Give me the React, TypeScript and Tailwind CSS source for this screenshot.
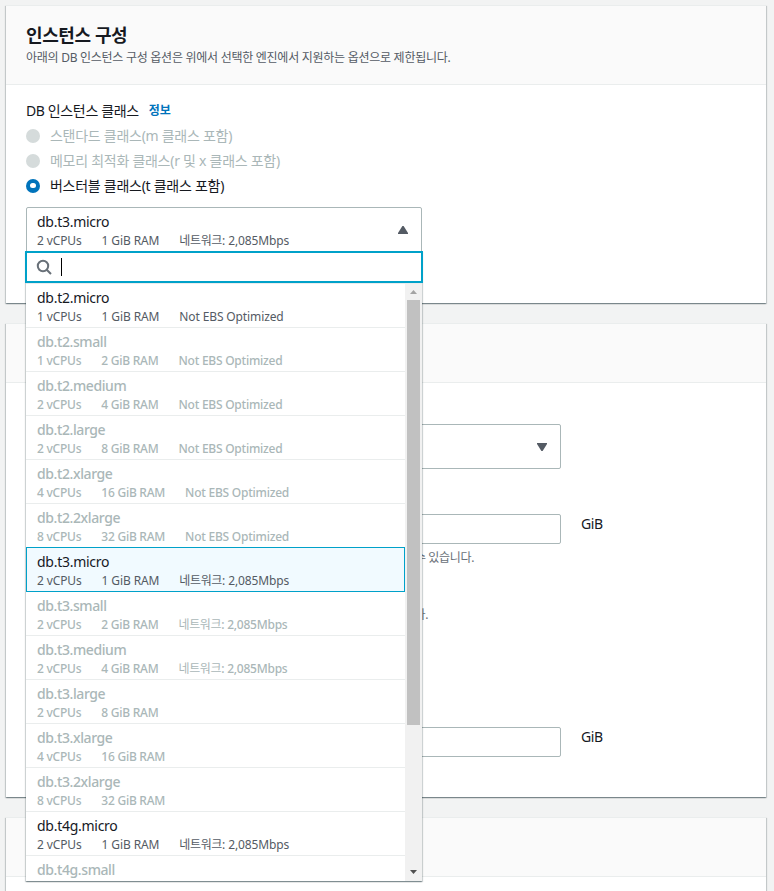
import React from "react";

type Instance = { name: string; cpu?: string; ram?: string; extra?: string; enabled?: boolean; selected?: boolean };

const EBS = "Not EBS Optimized";
const NET = "네트워크: 2,085Mbps";

const instances: Instance[] = [
  { name: "db.t2.micro", cpu: "1 vCPUs", ram: "1 GiB RAM", extra: EBS, enabled: true },
  { name: "db.t2.small", cpu: "1 vCPUs", ram: "2 GiB RAM", extra: EBS },
  { name: "db.t2.medium", cpu: "2 vCPUs", ram: "4 GiB RAM", extra: EBS },
  { name: "db.t2.large", cpu: "2 vCPUs", ram: "8 GiB RAM", extra: EBS },
  { name: "db.t2.xlarge", cpu: "4 vCPUs", ram: "16 GiB RAM", extra: EBS },
  { name: "db.t2.2xlarge", cpu: "8 vCPUs", ram: "32 GiB RAM", extra: EBS },
  { name: "db.t3.micro", cpu: "2 vCPUs", ram: "1 GiB RAM", extra: NET, enabled: true, selected: true },
  { name: "db.t3.small", cpu: "2 vCPUs", ram: "2 GiB RAM", extra: NET },
  { name: "db.t3.medium", cpu: "2 vCPUs", ram: "4 GiB RAM", extra: NET },
  { name: "db.t3.large", cpu: "2 vCPUs", ram: "8 GiB RAM" },
  { name: "db.t3.xlarge", cpu: "4 vCPUs", ram: "16 GiB RAM" },
  { name: "db.t3.2xlarge", cpu: "8 vCPUs", ram: "32 GiB RAM" },
  { name: "db.t4g.micro", cpu: "2 vCPUs", ram: "1 GiB RAM", extra: NET, enabled: true },
  { name: "db.t4g.small" },
];

const shadow =
  "shadow-[0_1px_1px_0_rgba(0,28,36,0.3),1px_1px_1px_0_rgba(0,28,36,0.15),-1px_1px_1px_0_rgba(0,28,36,0.15)]";

function Extra({ text }: { text: string }) {
  if (text !== NET) return <span>{text}</span>;
  return (
    <span>
      <span className="font-normal tracking-[-0.35px]">네트워크</span>
      {": 2,085Mbps"}
    </span>
  );
}

function InstanceText({ item }: { item: Instance }) {
  return (
    <>
      <div
        className={`h-[20px] text-[14px] leading-[20px] ${item.enabled ? "tracking-[-0.27px] text-[#16191f]" : "font-medium tracking-[-0.4px] text-[#aab7b8]"}`}
      >
        {item.name}
      </div>
      {item.cpu && (
        <div
          className={`flex h-[16px] gap-5 text-[12px] leading-[17px] ${item.enabled ? "tracking-[-0.12px] text-[#545b64]" : "font-medium tracking-[-0.24px] text-[#aab7b8]"}`}
        >
          <span>{item.cpu}</span>
          <span>{item.ram}</span>
          {item.extra && <Extra text={item.extra} />}
        </div>
      )}
    </>
  );
}

function Option({ item }: { item: Instance }) {
  return (
    <li
      className={`shrink-0 ${
        item.selected
          ? "relative z-10 -mt-px h-[45px] border border-[#00a1c9] bg-[#f1faff] pt-1 pl-[10px]"
          : item.cpu
            ? "h-11 border-b border-[#eaeded] pt-1 pl-[11px]"
            : "h-[25px] pt-1 pl-[11px]"
      }`}
    >
      <InstanceText item={item} />
    </li>
  );
}

function Dropdown() {
  return (
    <div className="absolute top-[43px] -left-[2px] h-[630px] w-[398px] px-px">
      <div className={`flex h-full flex-col bg-white ${shadow}`}>
        <div className="relative -mx-px flex h-8 shrink-0 items-center border-2 border-[#00a1c9] bg-white pl-[9px]">
          <svg width="16" height="16" viewBox="0 0 16 16" fill="none" stroke="#687078" strokeWidth="2">
            <circle cx="7" cy="7" r="5.2" />
            <path d="M10.7 10.7 15 15" />
          </svg>
          <div className="ml-[9px] h-[18px] w-px bg-black" />
        </div>
        <div className="flex min-h-0 flex-1 border-t border-[#eaeded]">
          <ul className="flex w-[379px] flex-col overflow-hidden">
            {instances.map((item) => (
              <Option key={item.name} item={item} />
            ))}
          </ul>
          <div className="flex w-[17px] flex-col items-center justify-between bg-[#f1f1f1]">
            <div className="flex w-full flex-col items-center">
              <svg className="mt-[6px] mb-[6px] block" width="7" height="4" viewBox="0 0 7 4" fill="#a3a3a3">
                <path d="M0 4 3.5 0 7 4z" />
              </svg>
              <div className="h-[425px] w-[13px] bg-[#c1c1c1]" />
            </div>
            <svg className="mb-[7px] block" width="7" height="4" viewBox="0 0 7 4" fill="#505050">
              <path d="M0 0 3.5 4 7 0z" />
            </svg>
          </div>
        </div>
      </div>
    </div>
  );
}

function Radio({ label, checked }: { label: string; checked?: boolean }) {
  return (
    <div className="flex h-[25px] items-center gap-[10px]">
      {checked ? (
        <span className="flex size-[14px] items-center justify-center rounded-full bg-[#0073bb]">
          <span className="size-[5.5px] rounded-full bg-white" />
        </span>
      ) : (
        <span className="size-[14px] rounded-full bg-[#d5dbdb]" />
      )}
      <span className={`text-[14px] tracking-[-0.27px] ${checked ? "text-[#16191f]" : "text-[#aab7b8]"}`}>{label}</span>
    </div>
  );
}

function Panel({ header, className, children }: { header?: React.ReactNode; className: string; children?: React.ReactNode }) {
  return (
    <section className={`border-t border-[#eaeded] bg-white ${shadow} ${className}`}>
      {header}
      {children}
    </section>
  );
}

function SizeField() {
  return (
    <div className="flex items-center">
      <div className="h-[30px] w-[535px] rounded-[2px] border border-[#aab7b8] bg-white" />
      <span className="-mt-[10px] ml-5 text-[14px] leading-5 tracking-[-0.4px]">GiB</span>
    </div>
  );
}

export default function App() {
  return (
    <main className="flex h-[891px] w-[774px] flex-col gap-5 overflow-hidden bg-[#f2f3f3] pt-[5px] pr-2 pl-[6px] font-['Noto_Sans','Noto_Sans_CJK_KR',sans-serif] text-[#16191f]">
      <Panel
        className="relative z-10 h-[298px] shrink-0"
        header={
          <header className="h-[79px] border-b border-[#eaeded] bg-[#fafafa] px-5 pt-[17px]">
            <h2 className="text-[18px] leading-[24px] font-bold tracking-[-0.4px]">인스턴스 구성</h2>
            <p className="mt-[2px] text-[12px] leading-[18px] tracking-[-0.27px] text-[#545b64]">
              아래의 DB 인스턴스 구성 옵션은 위에서 선택한 엔진에서 지원하는 옵션으로 제한됩니다.
            </p>
          </header>
        }
      >
        <div className="px-5 pt-[14px]">
          <div className="flex h-6 items-center gap-[10px] pb-px">
            <span className="text-[14px] tracking-[-0.37px]">DB 인스턴스 클래스</span>
            <span className="text-[12px] font-bold text-[#0073bb]">정보</span>
          </div>
          <Radio label="스탠다드 클래스(m 클래스 포함)" />
          <Radio label="메모리 최적화 클래스(r 및 x 클래스 포함)" />
          <Radio label="버스터블 클래스(t 클래스 포함)" checked />
          <div className="relative mt-[9px] h-[46px] w-[396px] rounded-[2px] border border-[#aab7b8]">
            <div className="flex h-full items-center justify-between pr-[13px] pl-[10px]">
              <div className="pb-px">
                <InstanceText item={instances[6]} />
              </div>
              <svg width="10" height="8" viewBox="0 0 10 8" fill="#545b64">
                <path d="M4.4 0h1.2L10 7v1H0V7z" />
              </svg>
            </div>
            <Dropdown />
          </div>
        </div>
      </Panel>

      <Panel className="h-[474px] shrink-0" header={<header className="h-[59px] border-b border-[#eaeded] bg-[#fafafa]" />}>
        <div className="px-5 pt-[41px]">
          <div className="flex h-[45px] w-[535px] items-center justify-end rounded-[2px] border border-[#aab7b8] pr-[13px]">
            <svg width="10" height="8" viewBox="0 0 10 8" fill="#545b64">
              <path d="M0 0h10v1L5.6 8H4.4L0 1z" />
            </svg>
          </div>
          <div className="mt-[45px]">
            <SizeField />
          </div>
          <p className="mt-[5px] w-[448px] text-right text-[12px] leading-[18px] tracking-[-0.35px] text-[#687078]">수 있습니다.</p>
          <p className="mt-[39px] w-[402px] text-right text-[12px] leading-[18px] tracking-[-0.35px] text-[#687078]">다.</p>
          <div className="mt-[103px]">
            <SizeField />
          </div>
        </div>
      </Panel>

      <Panel className="h-[200px] shrink-0" header={<header className="h-[59px] border-b border-[#eaeded] bg-[#fafafa]" />} />
    </main>
  );
}
